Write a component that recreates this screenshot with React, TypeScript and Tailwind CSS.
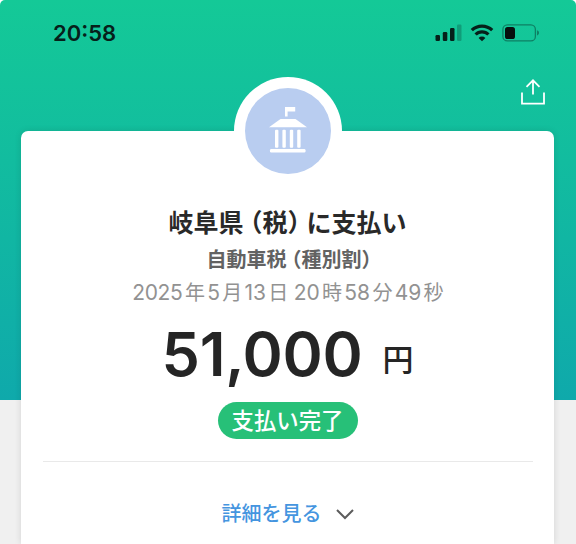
import type { ReactNode } from "react";

function SignalIcon() {
  return (
    <svg width="27" height="18" viewBox="0 0 27 18" fill="#06201a">
      <rect x="0.5" y="11" width="4.5" height="6" rx="1.2" />
      <rect x="7.8" y="8" width="4.5" height="9" rx="1.2" />
      <rect x="15" y="4" width="4.5" height="13" rx="1.2" />
      <rect x="22" y="0.5" width="4.5" height="16.5" rx="1.2" opacity="0.25" />
    </svg>
  );
}

function WifiIcon() {
  return (
    <svg width="24" height="18" viewBox="0 0 24 18" fill="none" stroke="#06201a" strokeWidth="3.2">
      <path d="M1.8 6.2a14.6 14.6 0 0 1 20.4 0" />
      <path d="M5.6 10.5a9 9 0 0 1 12.8 0" />
      <path d="M12 17.2l-3.4-3.3a4.8 4.8 0 0 1 6.8 0z" fill="#06201a" stroke="none" />
    </svg>
  );
}

function BatteryIcon() {
  return (
    <svg width="38" height="18" viewBox="0 0 38 18" fill="none">
      <rect x="0.9" y="0.9" width="32.5" height="16" rx="4.5" stroke="#06201a" strokeOpacity="0.42" strokeWidth="1.3" />
      <rect x="3" y="3" width="10" height="12" rx="2.6" fill="#06100e" />
      <path d="M35.2 6.3c2.2 1 2.2 4.2 0 5.2z" fill="#06201a" opacity="0.5" />
    </svg>
  );
}

function ShareIcon() {
  return (
    <svg width="24" height="26" viewBox="0 0 24 26" fill="none" stroke="white" strokeWidth="1.8">
      <path d="M1 13.5V24.7H23V13.5" />
      <path d="M12 15.5V1.5M5.5 7.8L12 1.3l6.5 6.5" />
    </svg>
  );
}

function GovernmentIcon() {
  return (
    <svg width="40" height="48" viewBox="0 0 40 48" fill="white">
      <path d="M17 0h10.2v4.6H19.6V9.5H17z" />
      <path d="M12.5 12h15L39 20.3H1z" />
      <rect x="7" y="22.7" width="3.4" height="18" rx="1" />
      <rect x="14.4" y="22.7" width="3.4" height="18" rx="1" />
      <rect x="21.8" y="22.7" width="3.4" height="18" rx="1" />
      <rect x="29.2" y="22.7" width="3.4" height="18" rx="1" />
      <rect x="2" y="42" width="35.5" height="3.4" rx="1.2" />
    </svg>
  );
}

function Line({ className, children }: { className: string; children: ReactNode }) {
  return <div className={`flex justify-center whitespace-pre ${className}`}>{children}</div>;
}

function Unit({ children }: { children: ReactNode }) {
  return <span className="mx-[2.3px] text-[20px]">{children}</span>;
}

export default function App() {
  return (
    <div className="h-[544px] w-[576px] overflow-hidden bg-white font-['Inter','Noto_Sans_CJK_JP',sans-serif]">
      <div className="h-full rounded-t-[5px] bg-[linear-gradient(to_bottom,#14c997_0px,#0fa9ab_400px,#f0f0f0_400px)]">
        <header className="flex h-[131px] flex-col">
          <div className="flex items-start justify-between pt-[23px] pr-[36px] pl-[53px]">
            <span className="text-[22px] leading-[21px] font-semibold text-[#06201a]">
              20<span className="relative -top-[2px]">:</span>58
            </span>
            <div className="mt-px flex items-center gap-[8px]">
              <SignalIcon />
              <WifiIcon />
              <BatteryIcon />
            </div>
          </div>
          <div className="mt-[35px] flex justify-end pr-[31px]">
            <ShareIcon />
          </div>
        </header>

        <main className="mr-[22px] ml-[21px] flex h-[413px] flex-col items-center rounded-t-[7px] bg-white shadow-[0_0_7px_rgba(0,0,0,0.12)]">
          <div className="-mt-[54px] flex size-[108px] shrink-0 items-center justify-center rounded-full bg-white">
            <div className="flex size-[86px] items-center justify-center rounded-full bg-[#b9cdf0]">
              <GovernmentIcon />
            </div>
          </div>

          <Line className="mt-[20px] text-[25px] leading-[36px] font-bold text-[#292929]">
            <span>岐阜県</span>
            <span className="ml-[6.5px] [font-feature-settings:'halt']">（</span>
            <span>税</span>
            <span className="mr-[6.5px] [font-feature-settings:'halt']">）</span>
            <span>に支払い</span>
          </Line>
          <Line className="mt-[5px] ml-[3px] text-[20px] leading-[28px] font-bold text-[#626262]">
            <span>自動車税</span>
            <span className="ml-[5px] [font-feature-settings:'halt']">（</span>
            <span>種別割</span>
            <span className="[font-feature-settings:'halt']">）</span>
          </Line>
          <Line className="mt-[5px] ml-[3px] items-baseline text-[21px] leading-[28px] text-[#929292]">
            <span className="tracking-[-0.3px]">2025</span>
            <Unit>年</Unit>
            <span>5</span>
            <Unit>月</Unit>
            <span>13</span>
            <Unit>日</Unit>
            <span className="ml-[3px]">20</span>
            <Unit>時</Unit>
            <span>58</span>
            <Unit>分</Unit>
            <span>49</span>
            <Unit>秒</Unit>
          </Line>
          <Line className="mt-[9px] items-baseline text-[#252525]">
            <span className="text-[61px] leading-[76px] font-semibold tracking-[-0.3px]">51,000</span>
            <span className="relative -top-[5px] ml-[20px] text-[31px] leading-[40px] font-medium">円</span>
          </Line>

          <div className="mt-[10px] flex h-[37px] w-[140px] items-center justify-center rounded-full bg-[#27c078] text-[22.4px] leading-[37px] font-medium text-white">
            支払い完了
          </div>
          <div className="mt-[22px] h-px w-[490px] shrink-0 bg-[#e9e9e9]" />
          <button className="mt-[38px] flex items-center text-[20px] leading-[28px] font-medium text-[#4595df]">
            詳細を見る
            <svg className="ml-[14px]" width="18" height="11" viewBox="0 0 18 11" fill="none" stroke="#5c5c5c" strokeWidth="2">
              <path d="M1 1l8 8 8-8" />
            </svg>
          </button>
        </main>
      </div>
    </div>
  );
}
